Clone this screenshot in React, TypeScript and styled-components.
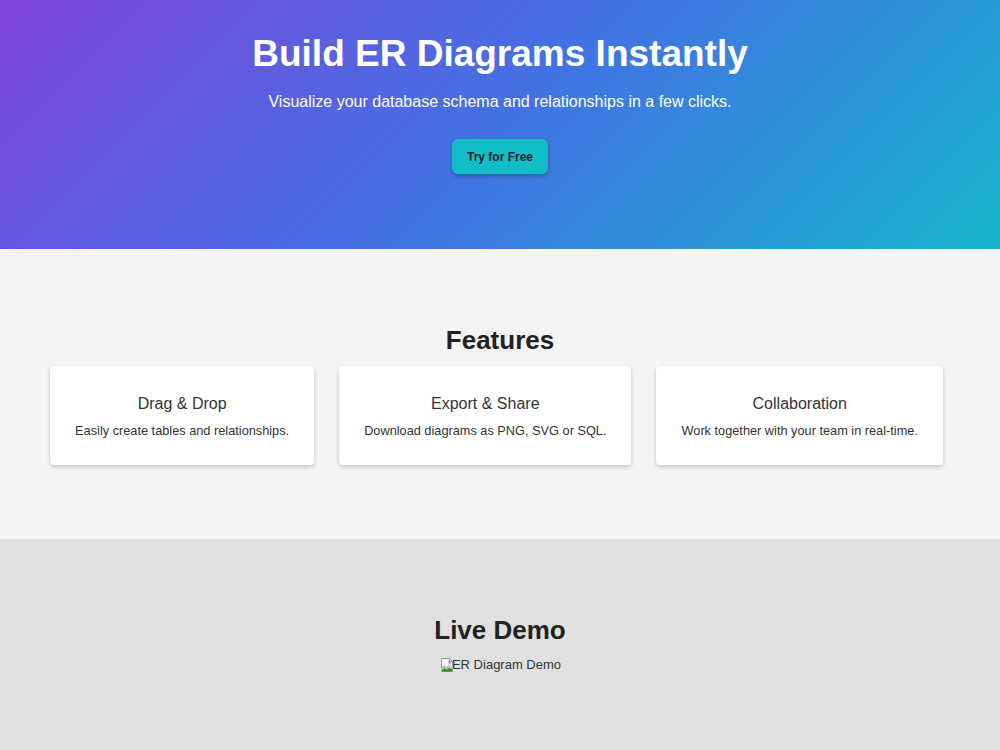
import styled, { createGlobalStyle } from "styled-components";

const GlobalStyle = createGlobalStyle`
  body {
    margin: 0;
    font-family: "Liberation Sans", Arial, sans-serif;
    color: #333;
    background: #e0e0e0;
  }
`;

const features = [
  { title: "Drag & Drop", text: "Easily create tables and relationships." },
  { title: "Export & Share", text: "Download diagrams as PNG, SVG or SQL." },
  { title: "Collaboration", text: "Work together with your team in real-time." },
];

const BrokenImage = () => (
  <svg width="16" height="16" viewBox="0 0 16 16">
    <path
      d="M2.5 1.5h8l3 3v4.5l-2 1.5-2-1.5-2 1.5-2-1.5-3 2z"
      fill="#f4f4f4"
      stroke="#9a9a9a"
    />
    <path d="M10.5 1.5v3h3" fill="none" stroke="#9a9a9a" />
    <path d="M2.5 12.5l3-2 2 1.5 2-1.5 2 1.5 2-1.5v4.5h-11z" fill="#6fae4e" />
    <path d="M2.5 14.5l3-3 2 1.5 3-2 3 2v1.5z" fill="#3f8a2e" />
    <circle cx="10.5" cy="5.5" r="1.2" fill="#5fa0e0" />
  </svg>
);

export default function App() {
  return (
    <>
      <GlobalStyle />
      <Hero>
        <Title>Build ER Diagrams Instantly</Title>
        <Subtitle>
          Visualize your database schema and relationships in a few clicks.
        </Subtitle>
        <CtaButton>Try for Free</CtaButton>
      </Hero>
      <Section tone="#f4f4f4">
        <Heading>Features</Heading>
        <CardRow>
          {features.map((f) => (
            <Card key={f.title}>
              <CardTitle>{f.title}</CardTitle>
              <CardText>{f.text}</CardText>
            </Card>
          ))}
        </CardRow>
      </Section>
      <Section tone="#e0e0e0">
        <Heading>Live Demo</Heading>
        <DemoImage role="img" aria-label="ER Diagram Demo">
          <BrokenImage />
          <span>ER Diagram Demo</span>
        </DemoImage>
      </Section>
    </>
  );
}

const Hero = styled.header`
  display: flex;
  flex-direction: column;
  align-items: center;
  padding: 33px 20px 75px;
  background: linear-gradient(135deg, #7f44dc 0%, #4272e3 50%, #17b5ce 100%);
  color: #fff;
  text-align: center;
`;

const Title = styled.h1`
  margin: 0 0 18px;
  font-size: 37px;
  font-weight: bold;
`;

const Subtitle = styled.p`
  margin: 0 0 28px;
  font-size: 16px;
`;

const CtaButton = styled.button`
  padding: 11px 15px 10px;
  border: none;
  border-radius: 6px;
  background: #12bec6;
  color: #1b1b2b;
  font-family: inherit;
  font-size: 12px;
  font-weight: bold;
  line-height: 14px;
  box-shadow: 0 2px 4px rgba(0, 0, 0, 0.25);
  cursor: pointer;
`;

const Section = styled.section<{ tone: string }>`
  display: flex;
  flex-direction: column;
  align-items: center;
  padding: 76px 20px 74px;
  background: ${({ tone }) => tone};
  text-align: center;
`;

const Heading = styled.h2`
  margin: 0 0 10px;
  font-size: 26px;
  font-weight: bold;
  color: #222;
`;

const CardRow = styled.div`
  display: flex;
  justify-content: center;
  gap: 25px;
  padding-right: 7px;
`;

const Card = styled.div`
  padding: 29px 25px 27px;
  background: #fff;
  border-radius: 4px;
  box-shadow: 0 2px 4px rgba(0, 0, 0, 0.2);
`;

const CardTitle = styled.h3`
  margin: 0 0 10px;
  font-size: 16px;
  font-weight: normal;
  color: #333;
`;

const CardText = styled.p`
  margin: 0;
  font-size: 12.75px;
  color: #333;
`;

const DemoImage = styled.div`
  display: inline-flex;
  align-items: flex-end;
  margin-top: 1px;
  font-size: 13px;
  color: #333;
  line-height: 15px;

  svg {
    flex-shrink: 0;
    margin-right: -3px;
    margin-bottom: -1px;
  }
`;
